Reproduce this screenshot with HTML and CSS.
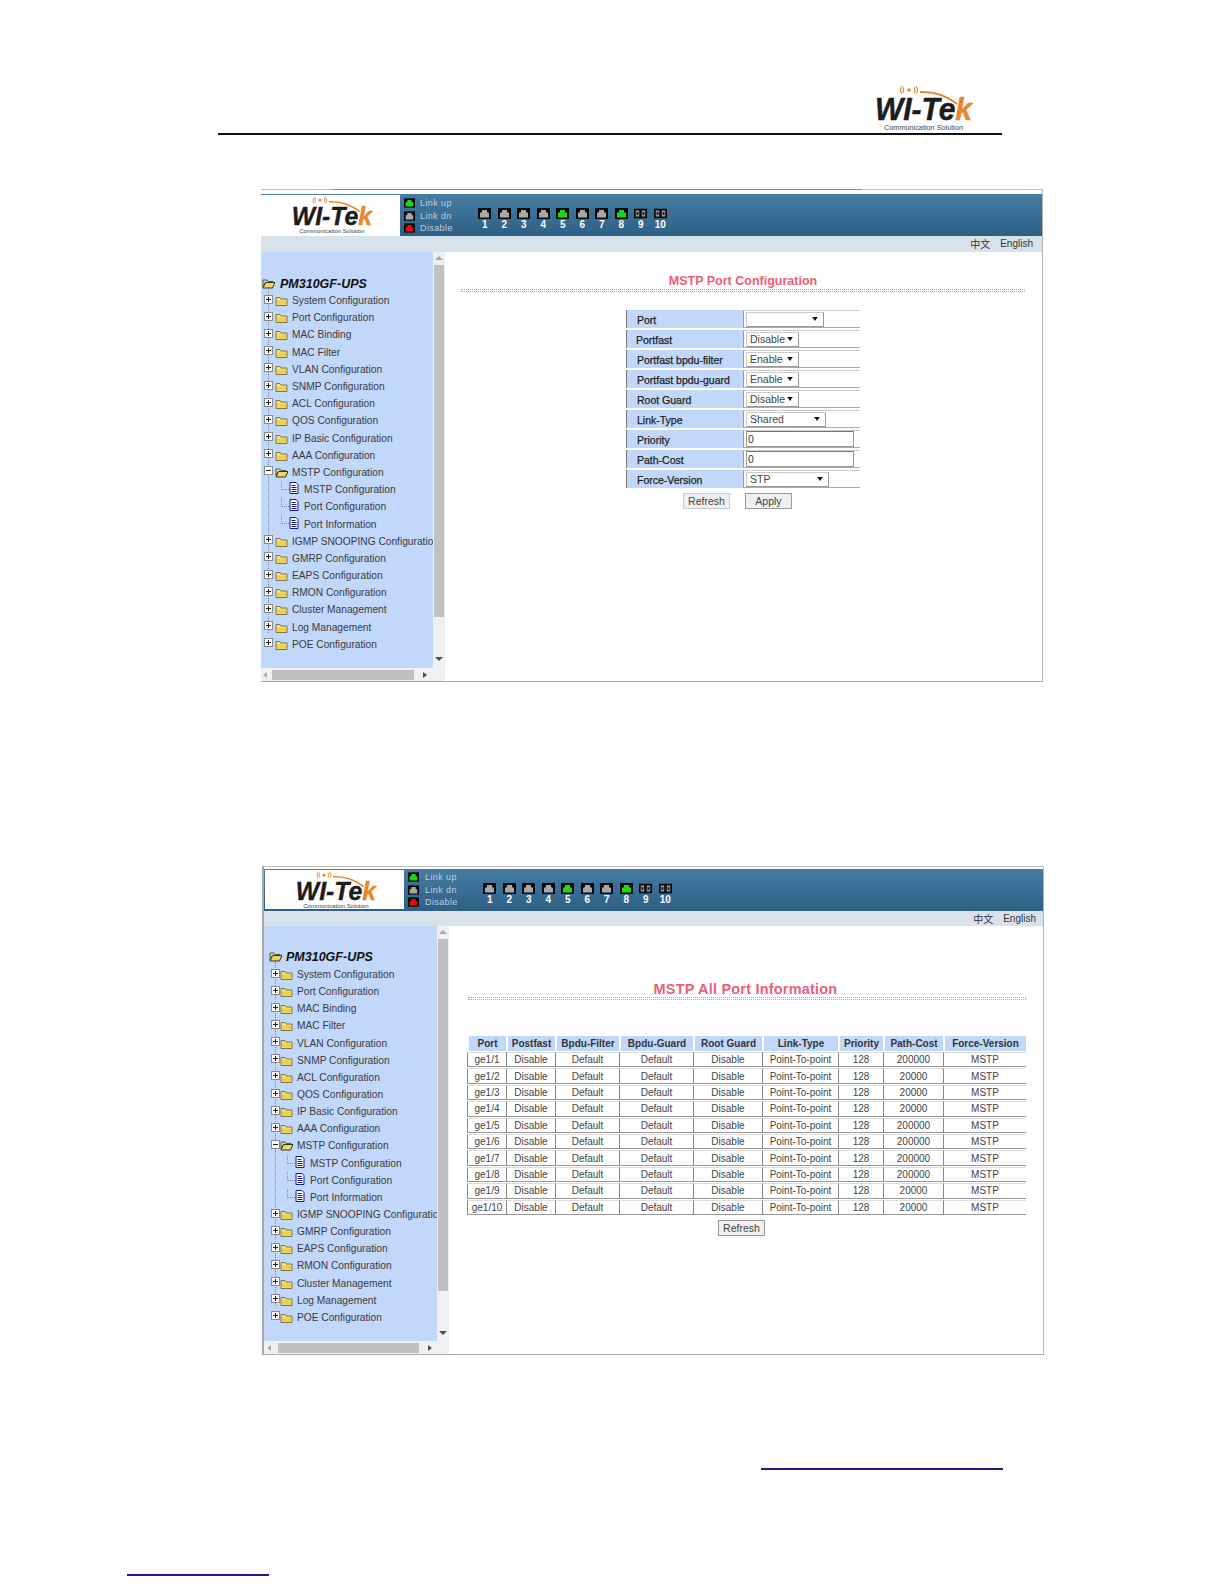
FILE: index.html
```html
<!DOCTYPE html>
<html lang="en">
<head>
<meta charset="utf-8">
<title>MSTP Port Configuration</title>
<link rel="stylesheet" href="styles.css">
</head>
<body>
<svg class="sprite" xmlns="http://www.w3.org/2000/svg">
  <symbol id="port" viewBox="0 0 13 11"><rect width="13" height="11" fill="#0a0a0a"/><path d="M2 9.500V5l2-1V2h5v2l2 1v4.500z" fill="currentColor"/></symbol>
  <symbol id="sfp" viewBox="0 0 15 11"><rect width="15" height="11" fill="#0a0a0a"/><rect x="2" y="2" width="4" height="7" fill="#9a9a9a"/><rect x="9" y="2" width="4" height="7" fill="#9a9a9a"/><rect x="3" y="4" width="2" height="3" fill="#0a0a0a"/><rect x="10" y="4" width="2" height="3" fill="#0a0a0a"/></symbol>
  <symbol id="plus" viewBox="0 0 9 9"><rect x=".5" y=".5" width="8" height="8" fill="#fff" stroke="#8a8a8a"/><path d="M2 4.500h5M4.500 2v5" stroke="#222"/></symbol>
  <symbol id="minus" viewBox="0 0 9 9"><rect x=".5" y=".5" width="8" height="8" fill="#fff" stroke="#8a8a8a"/><path d="M2 4.500h5" stroke="#222"/></symbol>
  <symbol id="folder" viewBox="0 0 13 11"><path d="M1 2.500h4l1 1.500h6v6.500H1z" fill="#f4e27a" stroke="#7c7448"/><path d="M2 5.500h9v4H2z" fill="#eed04a"/></symbol>
  <symbol id="open" viewBox="0 0 13 11"><path d="M1 2h4l1 1.500h5V5H3L1 9z" fill="#d8d8b8" stroke="#55553c"/><path d="M1 10l2.500-5.500H13L10.500 10z" fill="#ecd860" stroke="#333322"/></symbol>
  <symbol id="doc" viewBox="0 0 10 12"><path d="M1 .5h6l2 2v9H1z" fill="#fff" stroke="#1a1a8c"/><path d="M2.500 3.500h4M2.500 5.500h5M2.500 7.500h5M2.500 9.500h5" stroke="#1a1a8c"/></symbol>
</svg>

<header class="doc-head">
  <svg class="logo logo-doc" viewBox="0 0 100 46" role="img" aria-label="Wi-Tek logo">
    <g fill="none" stroke="#e8872a" stroke-width="1.100"><path d="M31 2q-2 3 0 6M41 2q2 3 0 6M29 1q-3 4 0 8M43 1q3 4 0 8"/><path d="M47 7Q68 6 84 19" stroke-width="2"/></g>
    <circle cx="36" cy="5" r="1.800" fill="#e8872a"/>
    <text x="2" y="35" class="logo-word" textLength="97" lengthAdjust="spacingAndGlyphs">WI-Te<tspan class="logo-k">k</tspan></text>
    <text x="11" y="45" class="logo-sub" textLength="79" lengthAdjust="spacingAndGlyphs">Communication Solution</text>
  </svg>
</header>

<section class="win win-a">
  <div class="win-top">
    <div class="logo-box">
      <svg class="logo logo-win" viewBox="0 0 100 46" role="img" aria-label="Wi-Tek logo">
        <g fill="none" stroke="#e8872a" stroke-width="1.100"><path d="M31 2q-2 3 0 6M41 2q2 3 0 6M29 1q-3 4 0 8M43 1q3 4 0 8"/><path d="M47 7Q68 6 84 19" stroke-width="2"/></g>
        <circle cx="36" cy="5" r="1.800" fill="#e8872a"/>
        <text x="2" y="35" class="logo-word" textLength="97" lengthAdjust="spacingAndGlyphs">WI-Te<tspan class="logo-k">k</tspan></text>
        <text x="11" y="45" class="logo-sub" textLength="79" lengthAdjust="spacingAndGlyphs">Communication Solution</text>
      </svg>
    </div>
    <ul class="legend">
      <li><svg class="lg-ico up"><use href="#port"/></svg>Link up</li>
      <li><svg class="lg-ico dn"><use href="#port"/></svg>Link dn</li>
      <li><svg class="lg-ico off"><use href="#port"/></svg>Disable</li>
    </ul>
    <ol class="ports">
      <li><svg class="p-ico dn"><use href="#port"/></svg>1</li>
      <li><svg class="p-ico dn"><use href="#port"/></svg>2</li>
      <li><svg class="p-ico dn"><use href="#port"/></svg>3</li>
      <li><svg class="p-ico dn"><use href="#port"/></svg>4</li>
      <li><svg class="p-ico up"><use href="#port"/></svg>5</li>
      <li><svg class="p-ico dn"><use href="#port"/></svg>6</li>
      <li><svg class="p-ico dn"><use href="#port"/></svg>7</li>
      <li><svg class="p-ico up"><use href="#port"/></svg>8</li>
      <li><svg class="p-ico"><use href="#sfp"/></svg>9</li>
      <li><svg class="p-ico"><use href="#sfp"/></svg>10</li>
    </ol>
  </div>
  <div class="win-sub"><span class="zh">中文</span><span>English</span></div>
  <div class="win-body">
    <nav class="tree-pane">
      <div class="tree-title"><svg class="i-open"><use href="#open"/></svg>PM310GF-UPS</div>
      <ul class="tree">
        <li><svg class="i-box"><use href="#plus"/></svg><svg class="i-f"><use href="#folder"/></svg>System Configuration</li>
        <li><svg class="i-box"><use href="#plus"/></svg><svg class="i-f"><use href="#folder"/></svg>Port Configuration</li>
        <li><svg class="i-box"><use href="#plus"/></svg><svg class="i-f"><use href="#folder"/></svg>MAC Binding</li>
        <li><svg class="i-box"><use href="#plus"/></svg><svg class="i-f"><use href="#folder"/></svg>MAC Filter</li>
        <li><svg class="i-box"><use href="#plus"/></svg><svg class="i-f"><use href="#folder"/></svg>VLAN Configuration</li>
        <li><svg class="i-box"><use href="#plus"/></svg><svg class="i-f"><use href="#folder"/></svg>SNMP Configuration</li>
        <li><svg class="i-box"><use href="#plus"/></svg><svg class="i-f"><use href="#folder"/></svg>ACL Configuration</li>
        <li><svg class="i-box"><use href="#plus"/></svg><svg class="i-f"><use href="#folder"/></svg>QOS Configuration</li>
        <li><svg class="i-box"><use href="#plus"/></svg><svg class="i-f"><use href="#folder"/></svg>IP Basic Configuration</li>
        <li><svg class="i-box"><use href="#plus"/></svg><svg class="i-f"><use href="#folder"/></svg>AAA Configuration</li>
        <li><svg class="i-box"><use href="#minus"/></svg><svg class="i-f"><use href="#open"/></svg>MSTP Configuration</li>
        <li class="leaf"><svg class="i-d"><use href="#doc"/></svg>MSTP Configuration</li>
        <li class="leaf"><svg class="i-d"><use href="#doc"/></svg>Port Configuration</li>
        <li class="leaf"><svg class="i-d"><use href="#doc"/></svg>Port Information</li>
        <li><svg class="i-box"><use href="#plus"/></svg><svg class="i-f"><use href="#folder"/></svg>IGMP SNOOPING Configuration</li>
        <li><svg class="i-box"><use href="#plus"/></svg><svg class="i-f"><use href="#folder"/></svg>GMRP Configuration</li>
        <li><svg class="i-box"><use href="#plus"/></svg><svg class="i-f"><use href="#folder"/></svg>EAPS Configuration</li>
        <li><svg class="i-box"><use href="#plus"/></svg><svg class="i-f"><use href="#folder"/></svg>RMON Configuration</li>
        <li><svg class="i-box"><use href="#plus"/></svg><svg class="i-f"><use href="#folder"/></svg>Cluster Management</li>
        <li><svg class="i-box"><use href="#plus"/></svg><svg class="i-f"><use href="#folder"/></svg>Log Management</li>
        <li><svg class="i-box"><use href="#plus"/></svg><svg class="i-f"><use href="#folder"/></svg>POE Configuration</li>
      </ul>
    </nav>
    <div class="vscroll"><i class="ar-up"></i><b class="v-thumb"></b><i class="ar-dn"></i></div>
    <main class="main">
      <h2 class="title">MSTP Port Configuration</h2>
      <div class="dots"></div>
      <table class="form">
        <tr><th>Port</th><td><span class="sel s78"><svg class="s-ar" viewBox="0 0 7 5"><path d="M0 0h7L3.500 5z"/></svg></span></td></tr>
        <tr><th class="tight">Portfast</th><td><span class="sel s52">Disable<svg class="s-ar" viewBox="0 0 7 5"><path d="M0 0h7L3.500 5z"/></svg></span></td></tr>
        <tr><th>Portfast bpdu-filter</th><td><span class="sel s52">Enable<svg class="s-ar" viewBox="0 0 7 5"><path d="M0 0h7L3.500 5z"/></svg></span></td></tr>
        <tr><th>Portfast bpdu-guard</th><td><span class="sel s52">Enable<svg class="s-ar" viewBox="0 0 7 5"><path d="M0 0h7L3.500 5z"/></svg></span></td></tr>
        <tr><th>Root Guard</th><td><span class="sel s52">Disable<svg class="s-ar" viewBox="0 0 7 5"><path d="M0 0h7L3.500 5z"/></svg></span></td></tr>
        <tr><th>Link-Type</th><td><span class="sel s80">Shared<svg class="s-ar" viewBox="0 0 7 5"><path d="M0 0h7L3.500 5z"/></svg></span></td></tr>
        <tr><th>Priority</th><td><input class="inp" value="0"></td></tr>
        <tr><th>Path-Cost</th><td><input class="inp" value="0"></td></tr>
        <tr><th>Force-Version</th><td><span class="sel s82">STP<svg class="s-ar" viewBox="0 0 7 5"><path d="M0 0h7L3.500 5z"/></svg></span></td></tr>
      </table>
      <div class="form-btns"><button class="btn">Refresh</button><button class="btn btn-dark">Apply</button></div>
    </main>
    <div class="hscroll"><i class="ar-l"></i><b class="h-thumb"></b><i class="ar-r"></i></div>
    <div class="corner"></div>
  </div>
</section>

<section class="win win-b">
  <div class="win-top">
    <div class="logo-box">
      <svg class="logo logo-win" viewBox="0 0 100 46" role="img" aria-label="Wi-Tek logo">
        <g fill="none" stroke="#e8872a" stroke-width="1.100"><path d="M31 2q-2 3 0 6M41 2q2 3 0 6M29 1q-3 4 0 8M43 1q3 4 0 8"/><path d="M47 7Q68 6 84 19" stroke-width="2"/></g>
        <circle cx="36" cy="5" r="1.800" fill="#e8872a"/>
        <text x="2" y="35" class="logo-word" textLength="97" lengthAdjust="spacingAndGlyphs">WI-Te<tspan class="logo-k">k</tspan></text>
        <text x="11" y="45" class="logo-sub" textLength="79" lengthAdjust="spacingAndGlyphs">Communication Solution</text>
      </svg>
    </div>
    <ul class="legend">
      <li><svg class="lg-ico up"><use href="#port"/></svg>Link up</li>
      <li><svg class="lg-ico dn"><use href="#port"/></svg>Link dn</li>
      <li><svg class="lg-ico off"><use href="#port"/></svg>Disable</li>
    </ul>
    <ol class="ports">
      <li><svg class="p-ico dn"><use href="#port"/></svg>1</li>
      <li><svg class="p-ico dn"><use href="#port"/></svg>2</li>
      <li><svg class="p-ico dn"><use href="#port"/></svg>3</li>
      <li><svg class="p-ico dn"><use href="#port"/></svg>4</li>
      <li><svg class="p-ico up"><use href="#port"/></svg>5</li>
      <li><svg class="p-ico dn"><use href="#port"/></svg>6</li>
      <li><svg class="p-ico dn"><use href="#port"/></svg>7</li>
      <li><svg class="p-ico up"><use href="#port"/></svg>8</li>
      <li><svg class="p-ico"><use href="#sfp"/></svg>9</li>
      <li><svg class="p-ico"><use href="#sfp"/></svg>10</li>
    </ol>
  </div>
  <div class="win-sub"><span class="zh">中文</span><span>English</span></div>
  <div class="win-body">
    <nav class="tree-pane">
      <div class="tree-title"><svg class="i-open"><use href="#open"/></svg>PM310GF-UPS</div>
      <ul class="tree">
        <li><svg class="i-box"><use href="#plus"/></svg><svg class="i-f"><use href="#folder"/></svg>System Configuration</li>
        <li><svg class="i-box"><use href="#plus"/></svg><svg class="i-f"><use href="#folder"/></svg>Port Configuration</li>
        <li><svg class="i-box"><use href="#plus"/></svg><svg class="i-f"><use href="#folder"/></svg>MAC Binding</li>
        <li><svg class="i-box"><use href="#plus"/></svg><svg class="i-f"><use href="#folder"/></svg>MAC Filter</li>
        <li><svg class="i-box"><use href="#plus"/></svg><svg class="i-f"><use href="#folder"/></svg>VLAN Configuration</li>
        <li><svg class="i-box"><use href="#plus"/></svg><svg class="i-f"><use href="#folder"/></svg>SNMP Configuration</li>
        <li><svg class="i-box"><use href="#plus"/></svg><svg class="i-f"><use href="#folder"/></svg>ACL Configuration</li>
        <li><svg class="i-box"><use href="#plus"/></svg><svg class="i-f"><use href="#folder"/></svg>QOS Configuration</li>
        <li><svg class="i-box"><use href="#plus"/></svg><svg class="i-f"><use href="#folder"/></svg>IP Basic Configuration</li>
        <li><svg class="i-box"><use href="#plus"/></svg><svg class="i-f"><use href="#folder"/></svg>AAA Configuration</li>
        <li><svg class="i-box"><use href="#minus"/></svg><svg class="i-f"><use href="#open"/></svg>MSTP Configuration</li>
        <li class="leaf"><svg class="i-d"><use href="#doc"/></svg>MSTP Configuration</li>
        <li class="leaf"><svg class="i-d"><use href="#doc"/></svg>Port Configuration</li>
        <li class="leaf"><svg class="i-d"><use href="#doc"/></svg>Port Information</li>
        <li><svg class="i-box"><use href="#plus"/></svg><svg class="i-f"><use href="#folder"/></svg>IGMP SNOOPING Configuration</li>
        <li><svg class="i-box"><use href="#plus"/></svg><svg class="i-f"><use href="#folder"/></svg>GMRP Configuration</li>
        <li><svg class="i-box"><use href="#plus"/></svg><svg class="i-f"><use href="#folder"/></svg>EAPS Configuration</li>
        <li><svg class="i-box"><use href="#plus"/></svg><svg class="i-f"><use href="#folder"/></svg>RMON Configuration</li>
        <li><svg class="i-box"><use href="#plus"/></svg><svg class="i-f"><use href="#folder"/></svg>Cluster Management</li>
        <li><svg class="i-box"><use href="#plus"/></svg><svg class="i-f"><use href="#folder"/></svg>Log Management</li>
        <li><svg class="i-box"><use href="#plus"/></svg><svg class="i-f"><use href="#folder"/></svg>POE Configuration</li>
      </ul>
    </nav>
    <div class="vscroll"><i class="ar-up"></i><b class="v-thumb"></b><i class="ar-dn"></i></div>
    <main class="main">
      <h2 class="title">MSTP All Port Information</h2>
      <div class="dots"></div>
      <table class="info">
        <colgroup><col class="c1"><col class="c2"><col class="c3"><col class="c4"><col class="c5"><col class="c6"><col class="c7"><col class="c8"><col class="c9"></colgroup>
        <thead><tr><th>Port</th><th>Postfast</th><th>Bpdu-Filter</th><th>Bpdu-Guard</th><th>Root Guard</th><th>Link-Type</th><th>Priority</th><th>Path-Cost</th><th>Force-Version</th></tr></thead>
        <tbody>
          <tr><td>ge1/1</td><td>Disable</td><td>Default</td><td>Default</td><td>Disable</td><td>Point-To-point</td><td>128</td><td>200000</td><td>MSTP</td></tr>
          <tr><td>ge1/2</td><td>Disable</td><td>Default</td><td>Default</td><td>Disable</td><td>Point-To-point</td><td>128</td><td>20000</td><td>MSTP</td></tr>
          <tr><td>ge1/3</td><td>Disable</td><td>Default</td><td>Default</td><td>Disable</td><td>Point-To-point</td><td>128</td><td>20000</td><td>MSTP</td></tr>
          <tr><td>ge1/4</td><td>Disable</td><td>Default</td><td>Default</td><td>Disable</td><td>Point-To-point</td><td>128</td><td>20000</td><td>MSTP</td></tr>
          <tr><td>ge1/5</td><td>Disable</td><td>Default</td><td>Default</td><td>Disable</td><td>Point-To-point</td><td>128</td><td>200000</td><td>MSTP</td></tr>
          <tr><td>ge1/6</td><td>Disable</td><td>Default</td><td>Default</td><td>Disable</td><td>Point-To-point</td><td>128</td><td>200000</td><td>MSTP</td></tr>
          <tr><td>ge1/7</td><td>Disable</td><td>Default</td><td>Default</td><td>Disable</td><td>Point-To-point</td><td>128</td><td>200000</td><td>MSTP</td></tr>
          <tr><td>ge1/8</td><td>Disable</td><td>Default</td><td>Default</td><td>Disable</td><td>Point-To-point</td><td>128</td><td>200000</td><td>MSTP</td></tr>
          <tr><td>ge1/9</td><td>Disable</td><td>Default</td><td>Default</td><td>Disable</td><td>Point-To-point</td><td>128</td><td>20000</td><td>MSTP</td></tr>
          <tr><td>ge1/10</td><td>Disable</td><td>Default</td><td>Default</td><td>Disable</td><td>Point-To-point</td><td>128</td><td>20000</td><td>MSTP</td></tr>
        </tbody>
      </table>
      <div class="info-btns"><button class="btn btn-dark">Refresh</button></div>
    </main>
    <div class="hscroll"><i class="ar-l"></i><b class="h-thumb"></b><i class="ar-r"></i></div>
    <div class="corner"></div>
  </div>
</section>

<footer class="doc-foot">
  <div class="link-line line-right"></div>
  <div class="link-line line-left"></div>
</footer>
</body>
</html>
```
FILE: styles.css
```css
* { box-sizing: border-box; }
html, body { margin: 0; padding: 0; background: #fff; }
body { width: 1224px; height: 1584px; overflow: hidden; font-family: "Liberation Sans", Arial, sans-serif; color: #333; }
.sprite { display: none; }
ul, ol { list-style: none; margin: 0; padding: 0; }

/* document header */
.doc-head { width: 784px; height: 135px; margin-left: 218px; padding: 85px 0 0 655px; border-bottom: 2px solid #111; }
.logo { display: block; }
.logo-doc { width: 100px; height: 46px; }
.logo-win { width: 83px; height: 38px; margin: 1px 0 0 29px; }
.logo-word { font: italic 700 32px "Liberation Sans", Arial, sans-serif; fill: #1c1c1c; stroke: #1c1c1c; stroke-width: .5px; }
.logo-k { fill: #e8872a; stroke: #e8872a; }
.logo-sub { font: 7px "Liberation Sans", Arial, sans-serif; fill: #444; }

/* captured window */
.win { display: flex; flex-direction: column; width: 782px; background: #fff; border-top: 1px solid #bdbdbd; border-right: 1px solid #b5b5b5; border-bottom: 1px solid #aaa; }
.win-a { position: relative; height: 493px; margin: 54px 0 0 261px; padding-top: 4px; }
.win-a::before { content: ""; position: absolute; left: 71px; top: -1px; width: 530px; height: 1px; background: #8c8c8c; }
.win-b { height: 489px; margin: 184px 0 0 262px; padding-top: 2px; border-left: 2px solid #a8a8a8; }

.win-top { display: flex; flex: none; height: 42px; background: linear-gradient(#467da3, #2e5f85); }
.logo-box { flex: none; width: 139px; height: 41px; margin-top: 1px; background: #fff; }
.win-b .logo-box { height: 39px; margin: 1px 0 0 1px; }
.legend { flex: none; width: 72px; padding: 3px 0 0 4px; font-size: 9px; letter-spacing: .4px; color: #b9d0e2; }
.win-b .legend { width: 73px; padding: 2px 0 0 4px; }
.legend li { display: flex; align-items: center; height: 12.600px; gap: 5px; white-space: nowrap; }
.win-b .legend li { gap: 6px; }
.lg-ico { flex: none; width: 11px; height: 10px; }
.up { color: #22d422; }
.dn { color: #a8a8a8; }
.off { color: #e01010; }
.ports { display: flex; padding: 14px 0 0 3px; }
.ports li { display: flex; flex-direction: column; align-items: center; width: 19.500px; font-size: 10px; font-weight: 700; line-height: 12px; color: #fff; }
.p-ico { display: block; width: 13px; height: 11px; }

.win-sub { display: flex; flex: none; justify-content: flex-end; align-items: center; gap: 10px; height: 16px; padding: 0 9px 1px 0; background: #d8e2ea; font-size: 10px; color: #333; }
.win-b .win-sub { height: 15px; padding-right: 7px; }
.zh { font-family: "Noto Sans CJK SC", sans-serif; }

.win-body { display: grid; flex: 1; min-height: 0; grid-template-columns: 172px 12px 1fr; grid-template-rows: minmax(0, 1fr) 13px; }
.win-b .win-body { grid-template-columns: 173px 12px 1fr; }

/* tree */
.tree-pane { overflow: hidden; padding-top: 23px; background: #c2d8fb; font-size: 10.200px; white-space: nowrap; }
.win-b .tree-pane { padding-top: 22px; }
.tree-title { display: flex; align-items: center; height: 17px; padding-left: 1px; font-size: 12.500px; font-weight: 700; font-style: italic; color: #111; gap: 5px; }
.win-b .tree-title { padding-left: 5px; gap: 4px; }
.i-open { flex: none; width: 13px; height: 11px; }
.tree { position: relative; }
.win-b .tree { margin-top: 1px; }
.tree::before { content: ""; position: absolute; left: 7px; top: -4px; bottom: 20px; border-left: 1px dotted #7a8aa8; }
.win-b .tree::before { left: 11px; }
.tree li { position: relative; display: flex; align-items: center; height: 17.200px; padding-left: 3px; color: #3a3a3a; }
.win-b .tree li { height: 17.150px; padding-left: 7px; }
.i-box { flex: none; position: relative; width: 9px; height: 9px; margin-top: -3px; }
.i-f { flex: none; width: 13px; height: 11px; margin: 0 4px 0 2px; }
.win-b .i-f { margin: 0 4px 0 0; }
.tree li.leaf { padding-left: 28px; }
.win-b .tree li.leaf { padding-left: 31px; }
.tree li.leaf::before { content: ""; position: absolute; left: 20px; top: 0; width: 7px; height: 8px; border-left: 1px dotted #7a8aa8; border-bottom: 1px dotted #7a8aa8; }
.win-b .tree li.leaf::before { left: 23px; }
.i-d { flex: none; width: 10px; height: 12px; margin: -3px 5px 0 0; }

/* scrollbars */
.vscroll { display: flex; flex-direction: column; background: #f0f0f0; padding: 0 1px; }
.v-thumb { display: block; height: 352px; margin-top: 13px; background: #c0c0c0; }
.ar-up, .ar-dn, .ar-l, .ar-r { display: block; width: 0; height: 0; border-style: solid; border-color: transparent; }
.ar-up { position: relative; top: 4px; margin-bottom: -4px; border-width: 0 4px 4px; border-bottom-color: #a8a8a8; align-self: center; }
.ar-dn { margin-top: 40px; align-self: center; border-width: 4px 4px 0; border-top-color: #505050; }
.hscroll { display: flex; align-items: center; padding-left: 2px; background: #f0f0f0; }
.ar-l { border-width: 3px 4px 3px 0; border-right-color: #a8a8a8; }
.h-thumb { display: block; width: 142px; height: 10px; margin-left: 5px; background: #c0c0c0; }
.ar-r { margin-left: 9px; border-width: 3px 0 3px 4px; border-left-color: #505050; }
.win-b .hscroll { padding-left: 3px; }
.win-b .h-thumb { margin-left: 7px; width: 141px; }
.corner { background: #f0f0f0; }

/* main */
.main { grid-column: 3; grid-row: 1 / 3; padding: 21px 17px 0 16px; }
.title { margin: 0; font-size: 12.500px; line-height: 17px; font-weight: 700; text-align: center; color: #ea6078; }
.win-b .main { padding: 55px 21px 0 19px; }
.win-b .title { padding-right: 3px; font-size: 14.500px; line-height: 17px; letter-spacing: .2px; }
.dots { height: 3px; margin-top: -1px; border: 1px dotted #aaa; }

.form { margin: 16px 0 0 165px; border-collapse: separate; border-spacing: 0 2px; table-layout: fixed; width: 234px; font-size: 10.500px; }
.form th { width: 117px; height: 18px; padding: 2px 0 0 10px; text-align: left; font-weight: 400; color: #1c1c1c; -webkit-text-stroke: .25px #1c1c1c; background: #c2d8fb; border-left: 1px solid #777; }
.form th.tight { padding-left: 9px; }
.form td { height: 18px; padding: 0 0 0 2px; border-top: 1px solid #ccc; border-bottom: 1px solid #aaa; border-left: 1px solid #999; }
.sel { display: flex; align-items: center; height: 15px; padding: 0 5px 0 3px; background: #fff; border: 1px solid #ccc; border-right-color: #999; border-bottom-color: #999; font-size: 10.500px; color: #444; }
.s78 { width: 78px; }
.s52 { width: 53px; }
.s80 { width: 80px; }
.s82 { width: 83px; }
.s-ar { flex: none; width: 6px; height: 4px; margin-left: auto; fill: #111; }
.inp { display: block; width: 108px; height: 16px; padding: 0 1px; border: 1px solid #999; border-top-color: #777; font: 10.500px "Liberation Sans", Arial, sans-serif; color: #333; background: #fff; }
.form-btns { display: flex; gap: 15px; margin: 3px 0 0 222px; }
.btn { width: 47px; height: 16px; padding: 0; background: #efefef; border: 1px solid #ccc; font: 10.500px "Liberation Sans", Arial, sans-serif; color: #444; }
.btn-dark { border-color: #999; }

.info { width: 559px; margin: 35px 0 0 -1px; table-layout: fixed; border-collapse: separate; border-spacing: 0 1px; font-size: 10px; text-align: center; }
.c1 { width: 39px; } .c2 { width: 49px; } .c3 { width: 64px; } .c4 { width: 74px; } .c5 { width: 69px; }
.c6 { width: 76px; } .c7 { width: 45px; } .c8 { width: 60px; } .c9 { width: 83px; }
.info th { height: 15px; padding: 0; font-weight: 700; background: #c2d8fb; color: #333; border-left: 2px solid #fff; }
.info td { height: 15.400px; padding: 0; color: #444; border-left: 1px solid #888; border-top: 1px solid #ddd; border-bottom: 1px solid #999; white-space: nowrap; }
.info-btns { display: flex; justify-content: center; margin: 4px 0 0 -11px; }

/* footer rules */
.doc-foot { display: flex; flex-direction: column; }
.link-line { height: 2px; background: #1a1a8c; }
.line-right { width: 242px; margin: 113px 0 0 761px; }
.line-left { width: 142px; margin: 104px 0 0 127px; }
```
